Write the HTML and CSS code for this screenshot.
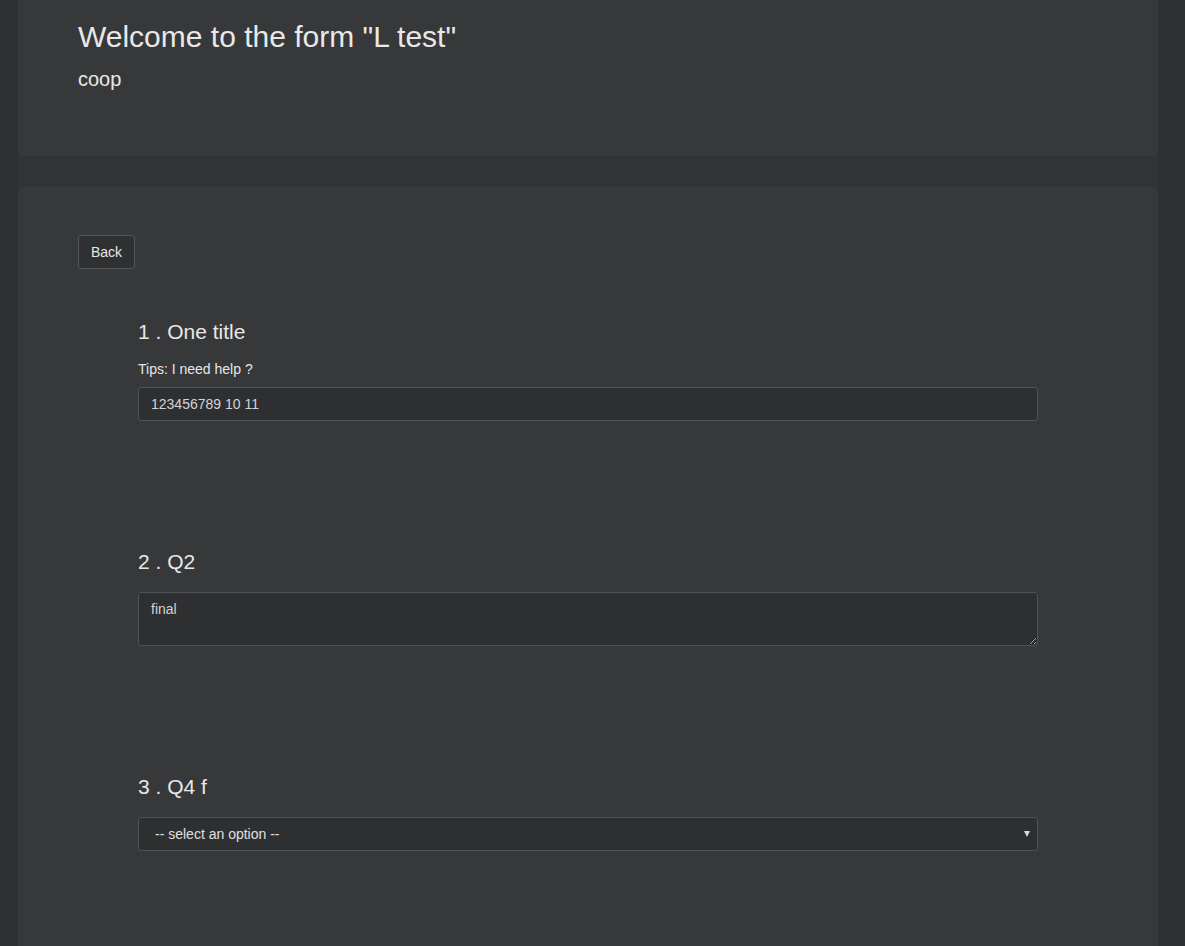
FILE: index.html
```html
<!DOCTYPE html>
<html>
<head>
<meta charset="utf-8">
<link rel="stylesheet" href="styles.css">
</head>
<body>
<div class="wrap">
  <header class="card card-head">
    <h1 class="title">Welcome to the form "L test"</h1>
    <div class="subtitle">coop</div>
  </header>
  <main class="card card-body">
    <button class="btn" type="button">Back</button>
    <div class="questions">
      <section class="question">
        <h4 class="q-title">1 . One title</h4>
        <label class="tips">Tips: I need help ?</label>
        <input class="field" type="text" value="123456789 10 11">
      </section>
      <section class="question">
        <h4 class="q-title">2 . Q2</h4>
        <textarea class="field area">final</textarea>
      </section>
      <section class="question">
        <h4 class="q-title">3 . Q4 f</h4>
        <div class="select-wrap">
          <select class="field select">
            <option>-- select an option --</option>
          </select>
        </div>
      </section>
    </div>
  </main>
</div>
</body>
</html>
```

FILE: styles.css
```css
html, body {
  margin: 0;
  padding: 0;
  height: 100%;
}
body {
  background: #2f3032;
  font-family: "Liberation Sans", Arial, sans-serif;
  color: #e6e6e6;
  overflow: hidden;
}
.wrap {
  margin: 0 27px 0 18px;
  background: #323335;
  min-height: 100%;
  display: flex;
  flex-direction: column;
  gap: 31px;
}
.card {
  background: #37383a;
  border-radius: 4px;
  padding: 0 60px;
}
.card-head {
  padding-top: 20px;
  padding-bottom: 66px;
  border-radius: 0 0 4px 4px;
}
.title {
  margin: 0;
  font-size: 30px;
  line-height: 33px;
  font-weight: normal;
  color: #e8e8e8;
}
.subtitle {
  margin-top: 15px;
  font-size: 20px;
  line-height: 22px;
  color: #e8e8e8;
}
.card-body {
  padding-top: 48px;
  flex: 1;
  border-radius: 4px 4px 0 0;
}
.btn {
  display: block;
  height: 34px;
  padding: 0 12px;
  background: #2f3032;
  border: 1px solid #55565a;
  border-radius: 3px;
  color: #e6e6e6;
  font-family: "Liberation Sans", Arial, sans-serif;
  font-size: 14px;
  line-height: 32px;
  margin: 0;
}
.questions {
  padding: 52px 60px 0;
}
.question {
  display: flex;
  flex-direction: column;
  margin-bottom: 130px;
}
.q-title {
  margin: 0 0 19px;
  font-size: 21px;
  line-height: 22px;
  font-weight: normal;
  color: #e8e8e8;
}
.tips {
  display: block;
  font-size: 14px;
  line-height: 20px;
  margin: -3px 0 8px;
  color: #e6e6e6;
}
.field {
  box-sizing: border-box;
  width: 100%;
  height: 34px;
  margin: 0;
  padding: 6px 12px;
  background: #2e2f31;
  border: 1px solid #505154;
  border-radius: 3px;
  color: #d4d4d4;
  font-family: "Liberation Sans", Arial, sans-serif;
  font-size: 14px;
  line-height: 20px;
  outline: none;
}
.area {
  height: 54px;
  padding-top: 6px;
  resize: vertical;
  display: block;
}
.select-wrap {
  position: relative;
}
.select {
  appearance: none;
  -webkit-appearance: none;
  padding-left: 16px;
  color: #e0e0e0;
}
.select-wrap::after {
  content: "";
  position: absolute;
  right: 8px;
  top: 14px;
  border-left: 3px solid transparent;
  border-right: 3px solid transparent;
  border-top: 6px solid #d8d8d8;
  pointer-events: none;
}
```
